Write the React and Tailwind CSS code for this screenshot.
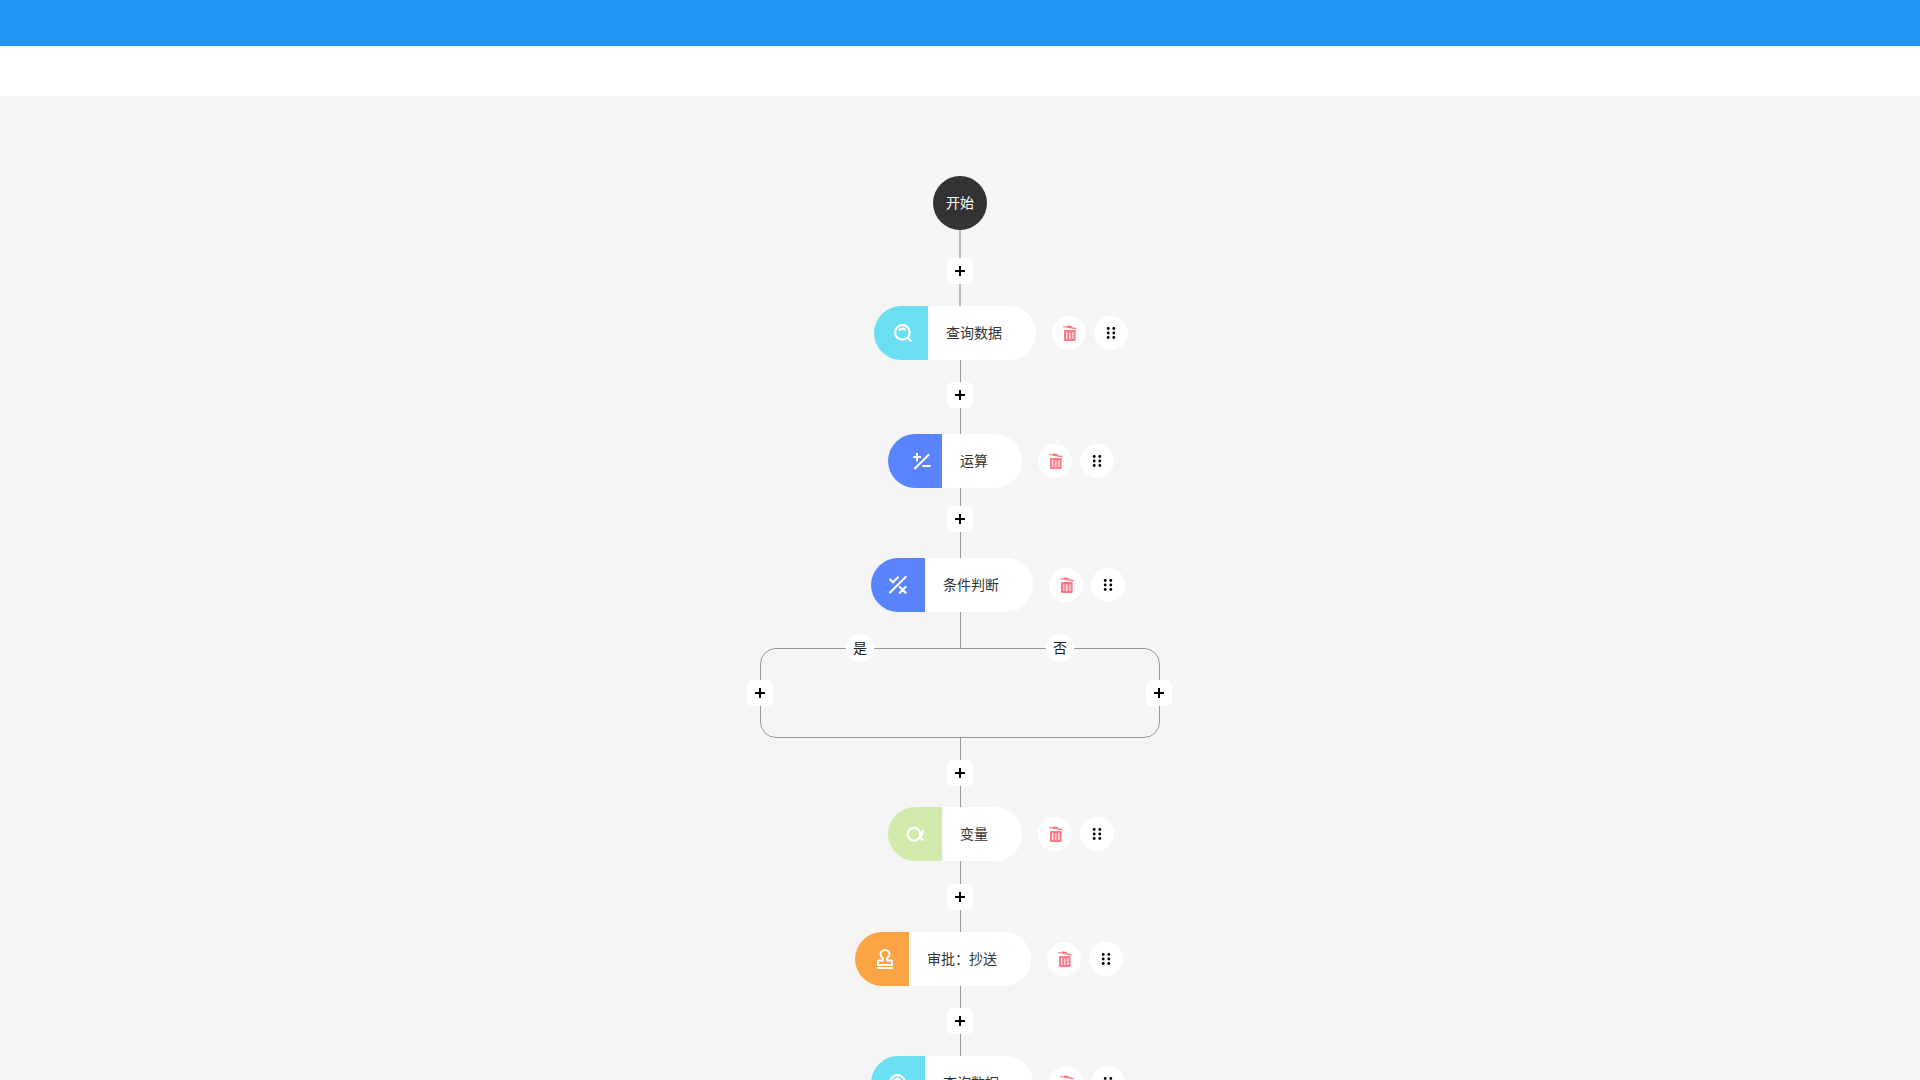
import React from "react";

function SearchIcon() {
  return (
    <svg width="18" height="18" viewBox="0 0 18 18" fill="none" stroke="currentColor" strokeWidth="2.1" strokeLinecap="round">
      <circle cx="8.4" cy="8.4" r="7.3" />
      <path d="M5.4 5.9Q8.2 3.400 10.800 5.600" />
      <path d="M13.7 13.7L16.8 16.8" />
    </svg>
  );
}

function CalcIcon() {
  return (
    <svg width="18" height="18" viewBox="0 0 18 18" fill="none" stroke="currentColor" strokeWidth="2">
      <path d="M0.2 5H8M4 1V9.2M1.4 17L16.2 2.2M9.3 14H17.8" />
    </svg>
  );
}

function ConditionIcon() {
  return (
    <svg width="18" height="18" viewBox="0 0 18 18" fill="none" stroke="currentColor" strokeWidth="2.1" strokeLinecap="round">
      <path d="M1.1 16.6L16.6 1.1" />
      <path d="M1.2 3.4L4 6.2L9 1.3" />
      <path d="M10.8 10.900L16.600 16.700M16.600 10.900L10.800 16.700" />
    </svg>
  );
}

function VariableIcon() {
  return (
    <svg width="18" height="18" viewBox="0 0 18 18" fill="none" stroke="currentColor" strokeWidth="2.1">
      <circle cx="8" cy="9.3" r="6.400" />
      <path d="M17 4.900C16.600 9 14.800 12.500 12.300 14" />
      <path d="M13.900 8C14 12.500 14.800 15 17.500 14.900" />
    </svg>
  );
}

function StampIcon() {
  return (
    <svg width="18" height="20" viewBox="0 0 18 20" fill="none" stroke="currentColor" strokeWidth="2">
      <path d="M2 16V12.300Q2 11.500 2.800 11.500H6.900V9.100C5.200 8.100 4.500 6.900 4.500 5.300C4.500 2.900 6.300 1 9 1S13.500 2.900 13.500 5.300C13.500 6.900 12.800 8.100 11.100 9.100V11.500H15.200Q16 11.500 16 12.300V16Z" />
      <path d="M1 19H17" />
    </svg>
  );
}

function TrashIcon() {
  return (
    <svg width="16" height="16" viewBox="0 0 16 16" fill="none">
      <path d="M2.200 0.900L5.700 1.500L6.300 0.200L10.700 0.900L10.900 2.300L15.700 3.100L15.400 4.400L2 2.100Z" fill="currentColor" />
      <path fillRule="evenodd" d="M3 5H14.600V15.200Q14.600 16 13.800 16H3.800Q3 16 3 15.200ZM5.200 7.300V14H6.300V7.300ZM8.300 7.300V14H9.400V7.300ZM11.400 7.300V14H12.500V7.300Z" fill="currentColor" />
    </svg>
  );
}

function DragIcon() {
  return (
    <svg width="16" height="16" viewBox="0 0 16 16" fill="currentColor">
      {[3.500, 8, 12.500].map((y) => (
        <g key={y}>
          <circle cx="5.200" cy={y} r="1.400" />
          <circle cx="10.800" cy={y} r="1.400" />
        </g>
      ))}
    </svg>
  );
}

function AddButton() {
  return (
    <button type="button" aria-label="添加节点" className="flex size-[26px] shrink-0 items-center justify-center rounded-md bg-white text-black">
      <svg width="10" height="10" viewBox="0 0 10 10" stroke="currentColor" strokeWidth="2">
        <path d="M5 0V10M0 5H10" />
      </svg>
    </button>
  );
}

function Line({ className }) {
  return <div className={`ml-px w-px shrink-0 bg-[#999] ${className}`} />;
}

function StartLine({ className }) {
  return <div className={`w-0.5 shrink-0 bg-[#bbb] ${className}`} />;
}

function Node({ label, icon, tone, align = "pr-2.5", divider = true }) {
  return (
    <div className={`flex shrink-0 ${align}`}>
      <div className="relative flex h-[54px]">
        <div className="flex overflow-hidden rounded-full bg-white">
          <div className={`flex w-[54px] shrink-0 items-center justify-center text-white ${tone}`}>{icon}</div>
          <div className={`w-0.5 ${divider ? "bg-[#f9f9f9]" : "bg-white"}`} />
          <div className="flex items-center pr-[34px] pl-4 whitespace-nowrap">{label}</div>
        </div>
        <div className="absolute top-2.5 left-full ml-4 flex gap-2">
          <button type="button" aria-label="删除" className="flex size-[34px] items-center justify-center rounded-full bg-white text-[#ff7a87]">
            <TrashIcon />
          </button>
          <button type="button" aria-label="拖动" className="flex size-[34px] items-center justify-center rounded-full bg-white text-black">
            <DragIcon />
          </button>
        </div>
      </div>
    </div>
  );
}

function Branch() {
  return (
    <div className="relative h-[90px] w-[400px] shrink-0 rounded-2xl border border-[#999]">
      <span className="absolute -top-[15px] left-[85px] flex size-7 items-center justify-center rounded-full bg-white text-[#222]">是</span>
      <span className="absolute -top-[15px] right-[85px] flex size-7 items-center justify-center rounded-full bg-white text-[#222]">否</span>
      <div className="absolute top-[31px] -left-[14px]">
        <AddButton />
      </div>
      <div className="absolute top-[31px] -right-[13px]">
        <AddButton />
      </div>
    </div>
  );
}

export default function App() {
  return (
    <div className="flex h-screen flex-col overflow-hidden bg-[#f5f5f5] font-['Liberation_Sans','Noto_Sans_CJK_SC',sans-serif] text-sm text-[#333]">
      <header className="h-[46px] shrink-0 bg-[#2196f3]" />
      <nav className="h-[50px] shrink-0 bg-white" />
      <main className="flex min-h-0 flex-1 flex-col items-center overflow-hidden pt-20">
        <div className="flex size-[54px] shrink-0 items-center justify-center rounded-full bg-[#333] text-white">开始</div>
        <StartLine className="h-7" />
        <AddButton />
        <StartLine className="h-[22px]" />
        <Node label="查询数据" tone="bg-[#6adff2] pl-1" icon={<SearchIcon />} />
        <Line className="h-[22px]" />
        <AddButton />
        <Line className="h-[26px]" />
        <Node label="运算" tone="bg-[#5a84ff] pl-3.5" icon={<CalcIcon />} divider={false} />
        <Line className="h-[18px]" />
        <AddButton />
        <Line className="h-[26px]" />
        <Node label="条件判断" tone="bg-[#5a84ff]" icon={<ConditionIcon />} align="pr-4" />
        <Line className="h-9" />
        <Branch />
        <Line className="h-[22px]" />
        <AddButton />
        <Line className="h-[21px]" />
        <Node label="变量" tone="bg-[#d0ebac]" icon={<VariableIcon />} />
        <Line className="h-[23px]" />
        <AddButton />
        <Line className="h-[22px]" />
        <Node label="审批：抄送" tone="bg-[#fba443] pl-1.5" icon={<StampIcon />} align="pr-[34px]" />
        <Line className="h-[22px]" />
        <AddButton />
        <Line className="h-[22px]" />
        <Node label="查询数据" tone="bg-[#6adff2]" icon={<SearchIcon />} align="pr-4" />
      </main>
    </div>
  );
}
